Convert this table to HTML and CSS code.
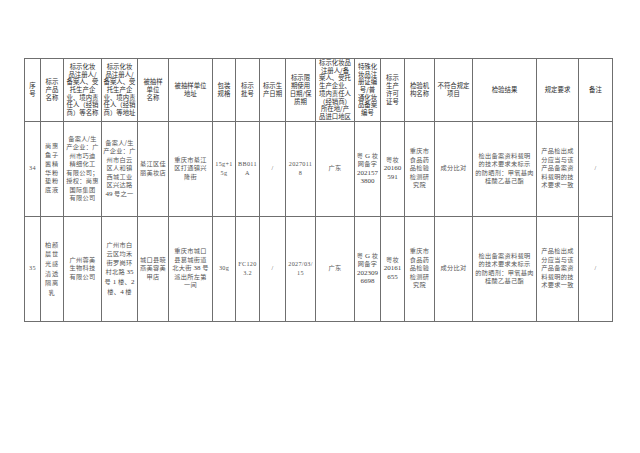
FILE: index.html
```html
<!DOCTYPE html>
<html lang="zh-CN">
<head>
<meta charset="utf-8">
<title>化妆品抽检结果</title>
<link rel="stylesheet" href="styles.css">
</head>
<body>
<table class="sheet">
  <colgroup>
    <col class="w1"><col class="w2"><col class="w3"><col class="w4"><col class="w5"><col class="w6">
    <col class="w7"><col class="w8"><col class="w9"><col class="w10"><col class="w11"><col class="w12">
    <col class="w13"><col class="w14"><col class="w15"><col class="w16"><col class="w17"><col class="w18">
  </colgroup>
  <thead>
    <tr class="head">
      <th>序<br>号</th>
      <th>标示<br>产品<br>名称</th>
      <th>标示化妆<br>品注册人/<br>备案人、受<br>托生产企<br>业、境内责<br>任人（经销<br>商）等名称</th>
      <th>标示化妆<br>品注册人/<br>备案人、受<br>托生产企<br>业、境内责<br>任人（经销<br>商）等地址</th>
      <th>被抽样<br>单位<br>名称</th>
      <th>被抽样单位<br>地址</th>
      <th>包装<br>规格</th>
      <th>标示<br>批号</th>
      <th>标示生<br>产日期</th>
      <th>标示限<br>期使用<br>日期/保<br>质期</th>
      <th>标示化妆品<br>注册人/备<br>案人、受托<br>生产企业、<br>境内责任人<br>（经销商）<br>所在地/产<br>品进口地区</th>
      <th>特殊化<br>妆品注<br>册证编<br>号/普<br>通化妆<br>品备案<br>编号</th>
      <th>标示<br>生产<br>许可<br>证号</th>
      <th>检验机<br>构名称</th>
      <th>不符合规定<br>项目</th>
      <th>检验结果</th>
      <th>规定要求</th>
      <th>备注</th>
    </tr>
  </thead>
  <tbody>
    <tr class="row-a">
      <td class="num">34</td>
      <td class="narrow">尚惠<br>鱼子<br>酱精<br>华粉<br>垫粉<br>底液</td>
      <td>备案人/生<br>产企业：广<br>州市巧迪<br>精细化工<br>有限公司；<br>授权：尚惠<br>国际集团<br>有限公司</td>
      <td>备案人/生<br>产企业：广<br>州市白云<br>区人和镇<br>西城工业<br>区兴达路<br><span class="num">49</span> 号之一</td>
      <td>綦江区佳<br>丽美妆店</td>
      <td>重庆市綦江<br>区打通镇兴<br>隆街</td>
      <td class="num">15g+1<br>5g</td>
      <td class="num">BB011<br>A</td>
      <td class="num">/</td>
      <td class="num">2027011<br>8</td>
      <td>广东</td>
      <td>粤 <span class="num">G</span> 妆<br>网备字<br><span class="num">202157<br>3800</span></td>
      <td>粤妆<br><span class="num">20160<br>591</span></td>
      <td>重庆市<br>食品药<br>品检验<br>检测研<br>究院</td>
      <td>成分比对</td>
      <td>检出备案资料载明<br>的技术要求未标示<br>的防晒剂：甲氧基肉<br>桂酸乙基己酯</td>
      <td>产品检出成<br>分应当与该<br>产品备案资<br>料载明的技<br>术要求一致</td>
      <td class="num">/</td>
    </tr>
    <tr class="row-b">
      <td class="num">35</td>
      <td class="narrow tall">柏颜<br>晨世<br>光感<br>清透<br>隔离<br>乳</td>
      <td>广州蓉美<br>生物科技<br>有限公司</td>
      <td class="mid">广州市白<br>云区均禾<br>街罗岗环<br>村北路 <span class="num">35</span><br>号 <span class="num">1</span> 楼、<span class="num">2</span><br>楼、<span class="num">4</span> 楼</td>
      <td>城口县晓<br>燕美容美<br>甲店</td>
      <td>重庆市城口<br>县葛城街道<br>北大街 <span class="num">38</span> 号<br>派出所左第<br>一间</td>
      <td class="num">30g</td>
      <td class="num">FC120<br>3.2</td>
      <td class="num">/</td>
      <td class="num">2027/03/<br>15</td>
      <td>广东</td>
      <td>粤 <span class="num">G</span> 妆<br>网备字<br><span class="num">202309<br>6698</span></td>
      <td>粤妆<br><span class="num">20161<br>655</span></td>
      <td>重庆市<br>食品药<br>品检验<br>检测研<br>究院</td>
      <td>成分比对</td>
      <td>检出备案资料载明<br>的技术要求未标示<br>的防晒剂：甲氧基肉<br>桂酸乙基己酯</td>
      <td>产品检出成<br>分应当与该<br>产品备案资<br>料载明的技<br>术要求一致</td>
      <td class="num">/</td>
    </tr>
  </tbody>
</table>
</body>
</html>
```
FILE: styles.css
```css
html, body {
  margin: 0;
  padding: 0;
  background: #ffffff;
}

.sheet {
  margin: 58px 0 0 24px;
  width: 588px;
  table-layout: fixed;
  border-collapse: collapse;
  font-family: "Noto Sans CJK SC", "Noto Sans", sans-serif;
}

.w1 { width: 16px; }
.w2 { width: 23px; }
.w3 { width: 38px; }
.w4 { width: 36px; }
.w5 { width: 31px; }
.w6 { width: 44px; }
.w7 { width: 23px; }
.w8 { width: 24px; }
.w9 { width: 26px; }
.w10 { width: 30px; }
.w11 { width: 39px; }
.w12 { width: 26px; }
.w13 { width: 24px; }
.w14 { width: 30px; }
.w15 { width: 38px; }
.w16 { width: 64px; }
.w17 { width: 42px; }
.w18 { width: 34px; }

.sheet th,
.sheet td {
  border: 1px solid #6f6f6f;
  padding: 0;
  text-align: center;
  vertical-align: middle;
  white-space: nowrap;
  overflow: hidden;
}

.sheet th {
  font-size: 6.4px;
  line-height: 7.7px;
  font-weight: normal;
  color: #2e2e2e;
}

.sheet td {
  font-size: 6.2px;
  line-height: 8.5px;
  color: #555555;
  letter-spacing: 0.3px;
}

.sheet td.narrow {
  letter-spacing: 0.8px;
  line-height: 8.8px;
}

.sheet td.tall {
  line-height: 9.7px;
}

.sheet td.mid {
  line-height: 9px;
}

.num {
  font-family: "Liberation Serif", "Times New Roman", serif;
  font-size: 7px;
  letter-spacing: 0;
  color: #444444;
}

.sheet td .num {
  font-size: 7px;
}

.head { height: 62px; }
.row-a { height: 95px; }
.row-b { height: 105px; }
```
